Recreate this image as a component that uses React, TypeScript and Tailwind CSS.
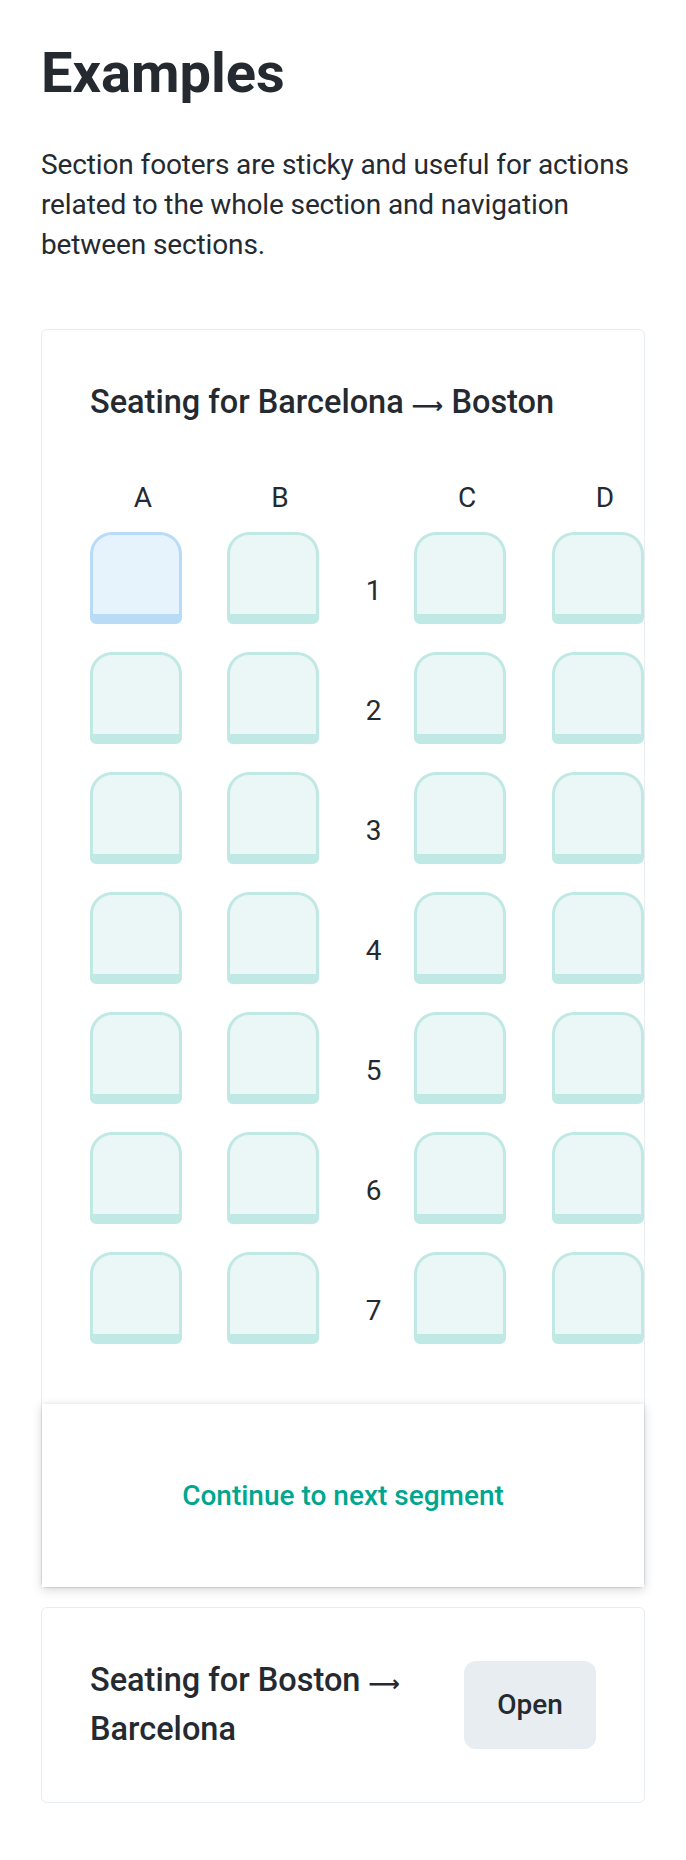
import React from "react";

function Seat({ selected = false }: { selected?: boolean }) {
  return (
    <div
      className={
        selected
          ? "h-[92px] w-[92px] shrink-0 rounded-t-[22px] rounded-b-[6px] border-[3px] border-b-[10px] border-[#b8dcf7] bg-[#e6f3fd]"
          : "h-[92px] w-[92px] shrink-0 rounded-t-[22px] rounded-b-[6px] border-[3px] border-b-[10px] border-[#c0e8e4] bg-[#eaf7f6]"
      }
    />
  );
}

function SeatRow({ n }: { n: number }) {
  return (
    <div className="flex">
      <Seat selected={n === 1} />
      <div className="ml-[45px]">
        <Seat />
      </div>
      <div className="flex w-[95px] shrink-0 items-center justify-center pl-[14px] pt-[26px] text-[28px] leading-[42px]">
        {n}
      </div>
      <Seat />
      <div className="ml-[46px]">
        <Seat />
      </div>
    </div>
  );
}

function Arrow() {
  return <span className="font-['DejaVu_Sans',_sans-serif] text-[22px] font-bold leading-none">⟶</span>;
}

export default function App() {
  const rows = [1, 2, 3, 4, 5, 6, 7];
  return (
    <div className="min-h-[1860px] bg-white px-[41px] pt-10 pb-[56px] font-[Roboto,_'Noto_Sans',_sans-serif] text-[#252a31]">
      <h1 className="text-[56px] font-bold leading-[66px]">Examples</h1>
      <p className="mt-[39px] text-[28px] leading-[40px] tracking-[-0.12px]">
        Section footers are sticky and useful for actions related to the whole section and navigation between sections.
      </p>

      <div className="mt-[64px] rounded-[6px] border border-[#e8edf1] bg-white">
        <div className="px-[48px] pt-[48px] pb-[60px]">
          <h2 className="text-[32.5px] font-medium leading-[49px]">
            Seating for Barcelona <Arrow /> Boston
          </h2>
          <div className="mt-[50px] flex w-[554px] text-[28px] leading-[42px]">
            <div className="w-[92px] shrink-0 pl-[14px] text-center">A</div>
            <div className="ml-[45px] w-[92px] shrink-0 pl-[14px] text-center">B</div>
            <div className="w-[95px] shrink-0" />
            <div className="w-[92px] shrink-0 pl-[14px] text-center">C</div>
            <div className="ml-[46px] w-[92px] shrink-0 pl-[14px] text-center">D</div>
          </div>
          <div className="mt-[13px] flex w-[554px] flex-col gap-[28px]">
            {rows.map((n) => (
              <SeatRow key={n} n={n} />
            ))}
          </div>
        </div>
        <div className="sticky bottom-0 flex h-[183px] items-center justify-center bg-white shadow-[0_3px_10px_rgba(37,42,49,0.18),0_0_4px_rgba(37,42,49,0.08)]">
          <span className="text-[28px] font-medium leading-[42px] text-[#00a68e]">Continue to next segment</span>
        </div>
      </div>

      <div className="mt-[19px] flex items-center gap-[24px] rounded-[6px] border border-[#e8edf1] bg-white p-[48px]">
        <h2 className="min-w-0 flex-1 text-[32.5px] font-medium leading-[49px]">
          Seating for Boston <Arrow /> Barcelona
        </h2>
        <button className="flex h-[88px] w-[132px] shrink-0 items-center justify-center rounded-[12px] bg-[#e8edf1] text-[28px] font-medium text-[#252a31]">
          Open
        </button>
      </div>
    </div>
  );
}
